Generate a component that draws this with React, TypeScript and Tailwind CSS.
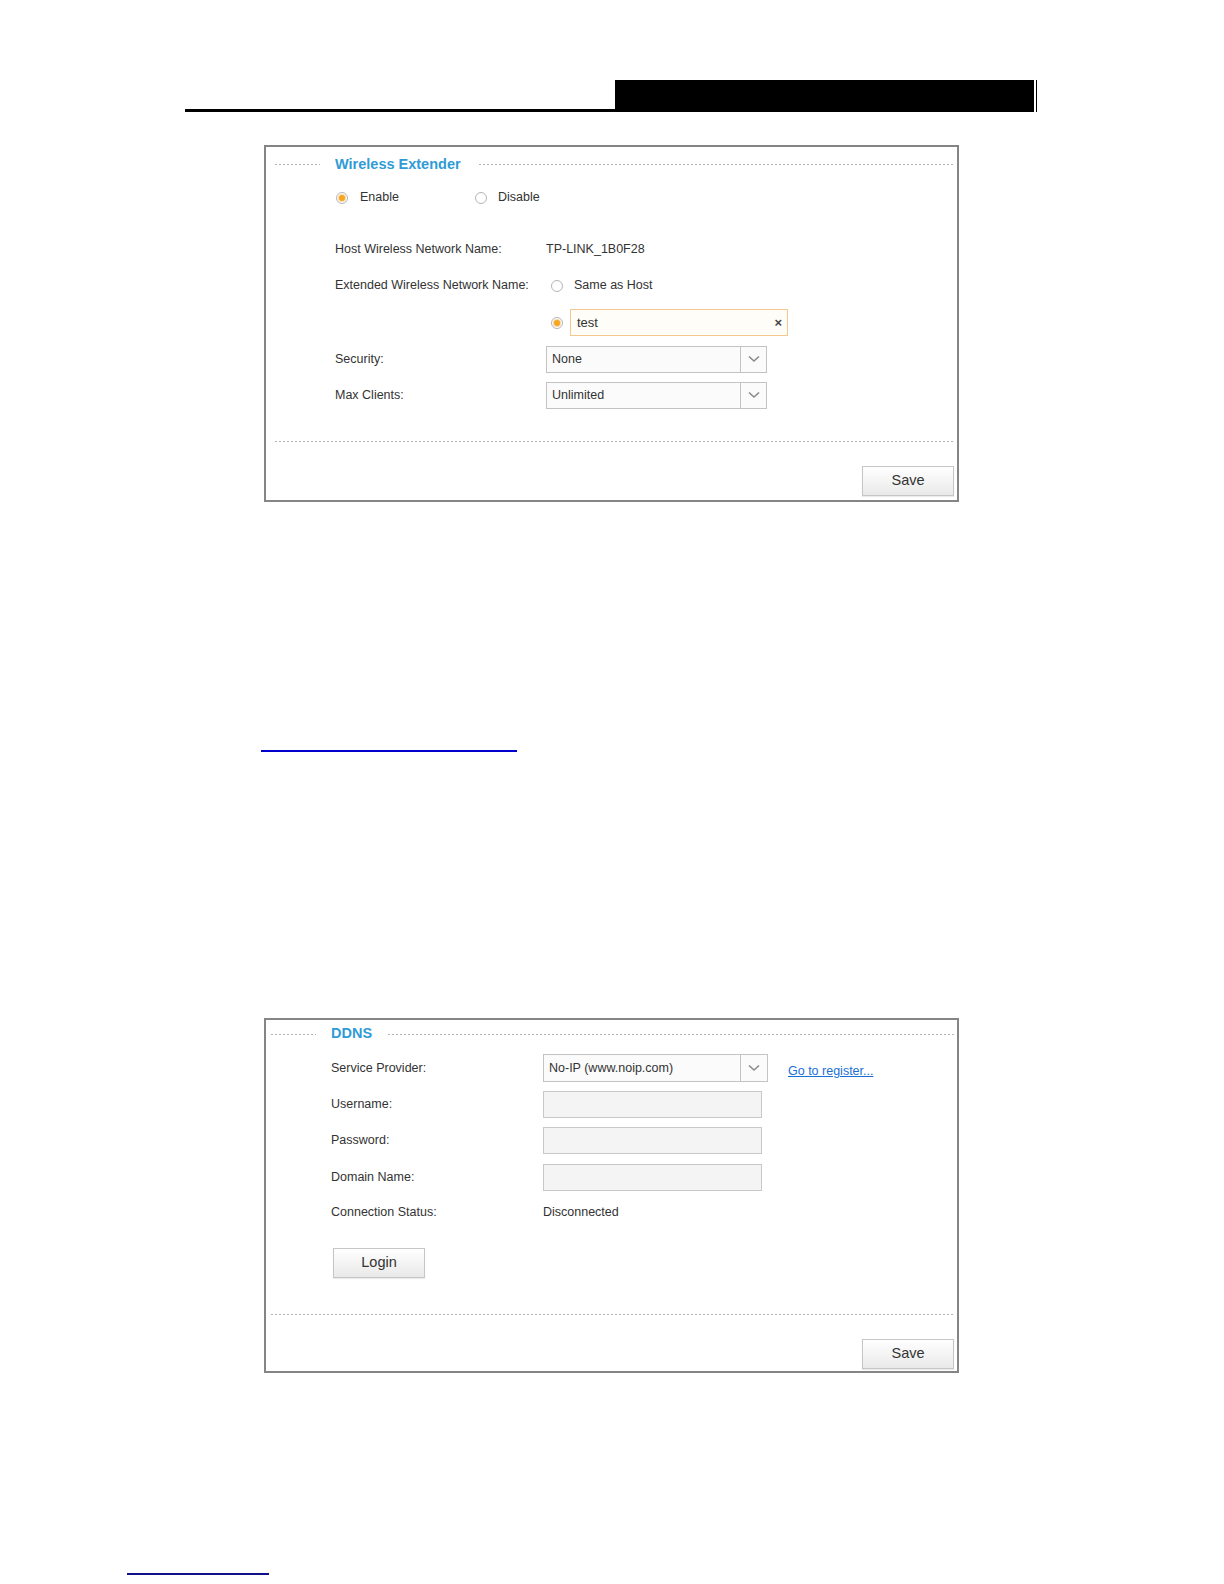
import type { ReactNode } from 'react';

const font = 'font-["Liberation_Sans",Arial,sans-serif]';

const Dashes = ({ className = '' }: { className?: string }) => (
  <div
    className={`h-px bg-[linear-gradient(to_right,#b3b3b3_60%,transparent_60%)] bg-[length:4px_1px] bg-repeat-x ${className}`}
  />
);

const Radio = ({ checked = false }: { checked?: boolean }) => (
  <span className="flex h-[12px] w-[12px] shrink-0 items-center justify-center rounded-full border border-[#b5b5b5] bg-white">
    {checked && <span className="h-[6px] w-[6px] rounded-full bg-[#f5a623] shadow-[0_0_0_1px_#fbd9a0]" />}
  </span>
);

const Chevron = () => (
  <svg width="12" height="8" viewBox="0 0 12 8" fill="none">
    <path d="M1 1.5 L6 6 L11 1.5" stroke="#8a8a8a" strokeWidth="1.6" />
  </svg>
);

const Select = ({ value, width, arrow }: { value: string; width: string; arrow: string }) => (
  <div className={`flex h-full ${width} items-stretch border border-[#c3c3c3] bg-[#fbfbfb]`}>
    <span className="flex flex-1 items-center pl-[5px] text-[#333]">{value}</span>
    <span className={`flex ${arrow} items-center justify-center border-l border-[#c3c3c3]`}>
      <Chevron />
    </span>
  </div>
);

const Button = ({ children }: { children: ReactNode }) => (
  <div className="flex h-[30px] w-[92px] items-center justify-center border border-[#c6c6c6] bg-[linear-gradient(to_bottom,#ffffff,#e9e9e9)] text-[14.5px] text-[#333] shadow-[0_1px_1px_rgba(0,0,0,0.08)]">
    {children}
  </div>
);

const Row = ({ h, mt = '', label, labelW, children }: { h: string; mt?: string; label: string; labelW: string; children?: ReactNode }) => (
  <div className={`flex ${h} ${mt} items-center`}>
    <span className={`${labelW} shrink-0 text-[#333]`}>{label}</span>
    {children}
  </div>
);

const WirelessExtender = () => (
  <div className="ml-[264px] mt-[33px] flex h-[357px] w-[695px] flex-col border-2 border-[#858585] text-[12.5px]">
    <div className="flex h-[35px] items-center pr-[2px]">
      <Dashes className="ml-[9px] w-[45px]" />
      <span className="ml-[15px] text-[14.5px] font-bold text-[#2f9bd7]">Wireless Extender</span>
      <Dashes className="ml-[18px] flex-1" />
    </div>
    <div className="flex h-[31px] items-center pl-[70px]">
      <div className="flex w-[139px] items-center gap-[12px]">
        <Radio checked />
        <span className="text-[#333]">Enable</span>
      </div>
      <div className="flex items-center gap-[11px]">
        <Radio />
        <span className="text-[#333]">Disable</span>
      </div>
    </div>
    <div className="mt-[18px] flex flex-col pl-[69px]">
      <Row h="h-[36px]" label="Host Wireless Network Name:" labelW="w-[211px]">
        <span className="text-[#333]">TP-LINK_1B0F28</span>
      </Row>
      <Row h="h-[37px]" label="Extended Wireless Network Name:" labelW="w-[211px]">
        <div className="ml-[5px] flex items-center gap-[11px]">
          <Radio />
          <span className="text-[#333]">Same as Host</span>
        </div>
      </Row>
      <Row h="h-[37px]" label="" labelW="w-[211px]">
        <div className="ml-[5px] flex items-center gap-[7px]">
          <Radio checked />
          <div className="flex h-[27px] w-[218px] items-center justify-between border border-[#f3c98f] bg-[#fffdf8] pl-[6px] pr-[5px]">
            <span className="text-[13px] text-[#333]">test</span>
            <span className="text-[13px] font-bold text-[#444]">×</span>
          </div>
        </div>
      </Row>
      <Row h="h-[36px]" label="Security:" labelW="w-[211px]">
        <div className="h-[27px]">
          <Select value="None" width="w-[221px]" arrow="w-[26px]" />
        </div>
      </Row>
      <Row h="h-[36px]" label="Max Clients:" labelW="w-[211px]">
        <div className="h-[27px]">
          <Select value="Unlimited" width="w-[221px]" arrow="w-[26px]" />
        </div>
      </Row>
    </div>
    <Dashes className="ml-[9px] mr-[2px] mt-[28px]" />
    <div className="mt-[24px] flex justify-end pr-[3px]">
      <Button>Save</Button>
    </div>
  </div>
);

const Input = () => <div className="h-[27px] w-[219px] border border-[#c8c8c8] bg-[#f4f4f4]" />;

const Ddns = () => (
  <div className="ml-[264px] mt-[266px] flex h-[355px] w-[695px] flex-col border-2 border-[#858585] text-[12.5px]">
    <div className="flex h-[28px] items-center pr-[2px]">
      <Dashes className="ml-[5px] w-[45px]" />
      <span className="ml-[15px] text-[14.5px] font-bold text-[#2f9bd7]">DDNS</span>
      <Dashes className="ml-[16px] flex-1" />
    </div>
    <div className="flex flex-col pl-[65px]">
      <Row h="h-[28px]" mt="mt-[6px]" label="Service Provider:" labelW="w-[212px]">
        <div className="h-[28px]">
          <Select value="No-IP (www.noip.com)" width="w-[225px]" arrow="w-[27px]" />
        </div>
        <span className="ml-[20px] mt-[6px] text-[#1a6fd6] underline">Go to register...</span>
      </Row>
      <Row h="h-[27px]" mt="mt-[9px]" label="Username:" labelW="w-[212px]">
        <Input />
      </Row>
      <Row h="h-[27px]" mt="mt-[9px]" label="Password:" labelW="w-[212px]">
        <Input />
      </Row>
      <Row h="h-[28px]" mt="mt-[9px]" label="Domain Name:" labelW="w-[212px]">
        <Input />
      </Row>
      <Row h="h-[27px]" mt="mt-[8px]" label="Connection Status:" labelW="w-[212px]">
        <span className="text-[#333]">Disconnected</span>
      </Row>
      <div className="ml-[2px] mt-[22px]">
        <Button>Login</Button>
      </div>
    </div>
    <Dashes className="ml-[5px] mr-[2px] mt-[36px]" />
    <div className="mt-[24px] flex justify-end pr-[3px]">
      <Button>Save</Button>
    </div>
  </div>
);

export default function App() {
  return (
    <div className={`h-[1584px] w-[1224px] overflow-hidden bg-white ${font}`}>
      <div className="ml-[185px] mt-[80px] flex h-[32px] w-[852px] items-stretch">
        <div className="flex-1 border-b-[3px] border-black" />
        <div className="w-[419px] bg-black" />
        <div className="w-[2px]" />
        <div className="w-[1px] bg-black" />
      </div>
      <WirelessExtender />
      <div className="ml-[261px] mt-[248px] h-[2px] w-[256px] bg-[#0000cc]" />
      <Ddns />
      <div className="ml-[127px] mt-[200px] h-[2px] w-[142px] bg-[#101088]" />
    </div>
  );
}
